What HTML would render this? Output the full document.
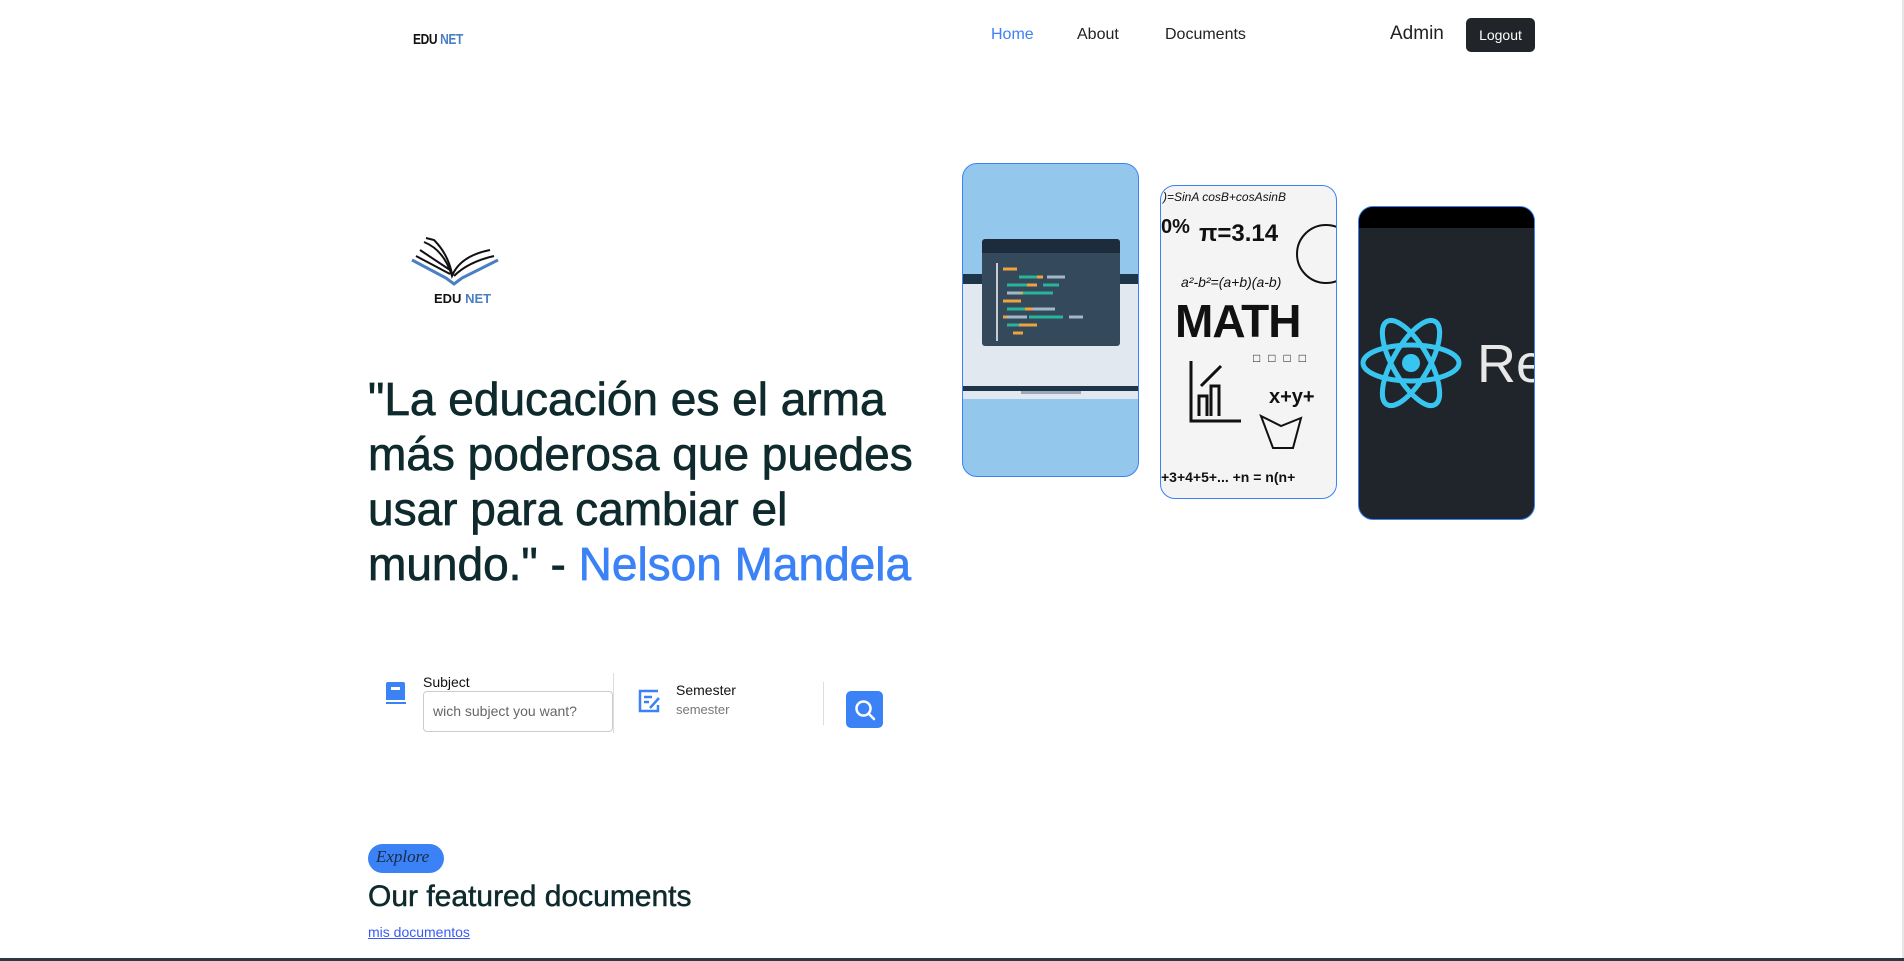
<!DOCTYPE html>
<html><head><meta charset="utf-8">
<style>
*{margin:0;padding:0;box-sizing:border-box}
body{width:1904px;height:961px;background:#fff;font-family:"Liberation Sans",sans-serif;position:relative;overflow:hidden;color:#10282b}
.abs{position:absolute}
.nav a{position:absolute;top:26px;font-size:16px;color:#222;text-decoration:none}
.logo{font-family:"Liberation Sans Narrow","Liberation Sans",sans-serif;font-weight:bold;letter-spacing:-0.5px}
.card{position:absolute;width:177px;height:314px;border:1px solid #3b82f6;border-radius:15px;overflow:hidden}
.quote{left:368px;top:372px;font-size:46px;line-height:55px;white-space:nowrap;color:#0e2a2c;-webkit-text-stroke:0.7px currentColor}
</style></head><body>
<div class="abs logo" style="left:413px;top:31px;font-size:15px;transform:scaleX(0.8);transform-origin:left"><span style="color:#111">EDU</span> <span style="color:#4a7fc4">NET</span></div>
<div class="nav">
<a style="left:991px;color:#3b82f6">Home</a>
<a style="left:1077px">About</a>
<a style="left:1165px">Documents</a>
</div>
<div class="abs" style="left:1390px;top:23px;font-size:19px;color:#222">Admin</div>
<div class="abs" style="left:1466px;top:18px;width:69px;height:34px;background:#212529;border-radius:5px;color:#fff;font-size:14px;line-height:34px;text-align:center">Logout</div>

<svg class="abs" style="left:410px;top:236px" width="92" height="72" viewBox="0 0 92 72">
<path d="M2 24 L36 42 L44 48 L52 42 L88 24" fill="none" stroke="#4a7fc4" stroke-width="3"/>
<path d="M6 20 L40 38 M10 14 L40 34 M14 6 Q34 14 42 40 Q50 20 80 14 M44 40 Q58 26 84 20" fill="none" stroke="#111" stroke-width="2"/>
<path d="M16 2 L24 4 Q38 18 42 38" fill="none" stroke="#111" stroke-width="2"/>
<text x="24" y="67" font-family="Liberation Sans" font-weight="bold" font-size="13" fill="#111">EDU <tspan fill="#4a7fc4">NET</tspan></text>
</svg>

<div class="abs quote">"La educación es el arma<br>más poderosa que puedes<br>usar para cambiar el<br>mundo." - <span style="color:#3b82f6">Nelson Mandela</span></div>

<!-- search -->
<svg class="abs" style="left:385px;top:681px" width="22" height="24" viewBox="0 0 22 24"><rect x="1" y="1" width="19" height="20" rx="2" fill="#3b82f6"/><rect x="6" y="6" width="9" height="3" fill="#fff"/><rect x="1" y="19" width="20" height="3" fill="#fff"/><rect x="1" y="21" width="20" height="2" fill="#3b82f6"/></svg>
<div class="abs" style="left:423px;top:674px;font-size:14px;color:#111">Subject</div>
<div class="abs" style="left:423px;top:691px;width:190px;height:41px;border:1px solid #ccc;border-radius:4px;font-size:14px;color:#666;padding:11px 9px">wich subject you want?</div>
<div class="abs" style="left:613px;top:673px;width:1px;height:60px;background:#ddd"></div>
<svg class="abs" style="left:637px;top:688px" width="26" height="26" viewBox="0 0 26 26"><path d="M21 3H3v20h18v-6" fill="none" stroke="#3b82f6" stroke-width="2.5"/><path d="M7 9h8M7 14h5" stroke="#3b82f6" stroke-width="2.5"/><path d="M13 20l9-10" stroke="#3b82f6" stroke-width="2.5"/></svg>
<div class="abs" style="left:676px;top:682px;font-size:14px;color:#111">Semester</div>
<div class="abs" style="left:676px;top:702px;font-size:13px;color:#777">semester</div>
<div class="abs" style="left:823px;top:682px;width:1px;height:43px;background:#ddd"></div>
<div class="abs" style="left:846px;top:691px;width:37px;height:37px;background:#3b82f6;border-radius:5px"></div>
<svg class="abs" style="left:854px;top:699px" width="22" height="22" viewBox="0 0 22 22"><circle cx="9.5" cy="9.5" r="7" fill="none" stroke="#fff" stroke-width="2.5"/><path d="M15 15l5 5" stroke="#fff" stroke-width="2.5" stroke-linecap="round"/></svg>

<div class="abs" style="left:368px;top:844px;width:76px;height:29px;background:#3b82f6;border-radius:15px;font-family:'Liberation Serif',serif;font-style:italic;font-size:17px;color:#1a2a44;padding:3px 8px">Explore</div>
<div class="abs" style="left:368px;top:880px;font-size:30px;color:#0e2a2c;-webkit-text-stroke:0.5px currentColor">Our featured documents</div>
<div class="abs" style="left:368px;top:924px;font-size:14px;color:#3b5bf6;text-decoration:underline">mis documentos</div>
<div class="abs" style="left:0;top:958px;width:1904px;height:3px;background:#2b3a3e"></div>
<div class="abs" style="left:1902px;top:0;width:2px;height:958px;background:#e5e5e5"></div>

<!-- card1 -->
<div class="card" style="left:962px;top:163px;background:#93c7ec">
<div class="abs" style="left:0;top:110px;width:177px;height:10px;background:#1d3449"></div>
<div class="abs" style="left:0;top:120px;width:177px;height:115px;background:#e2e8ef"></div>
<div class="abs" style="left:0;top:222px;width:177px;height:5px;background:#1d3449"></div>
<div class="abs" style="left:58px;top:227px;width:60px;height:3px;background:#9aa8b8"></div>
<div class="abs" style="left:19px;top:75px;width:138px;height:107px;background:#34495c;border-radius:3px;border-top:14px solid #1c2c3d"></div>
<svg class="abs" style="left:30px;top:95px" width="120" height="85">
<g stroke-width="3"><path d="M10 10h14M30 18h20M22 26h22M24 34h14M10 42h18M22 50h24M10 58h14M24 66h20M20 74h10" stroke="#f0a33a"/><path d="M26 18h18M14 26h20M50 26h16M30 34h30M14 50h18M36 58h34M14 66h12" stroke="#28b59b"/><path d="M54 18h18M14 34h14M40 50h22M14 58h20M76 58h14" stroke="#9fb9c8"/></g>
<path d="M4 4v78" stroke="#ccc" stroke-width="2"/></svg>
</div>

<!-- card2 -->
<div class="card" style="left:1160px;top:185px;background:#f4f4f4;font-family:'Liberation Sans',sans-serif;color:#111">
<div class="abs" style="left:2px;top:4px;font-size:12px;font-style:italic;white-space:nowrap">)=SinA cosB+cosAsinB</div>
<div class="abs" style="left:0;top:30px;font-size:20px;font-weight:bold">0%</div>
<div class="abs" style="left:38px;top:34px;font-size:24px;font-weight:bold;white-space:nowrap">π=3.14</div>
<div class="abs" style="left:20px;top:88px;font-size:14px;font-style:italic;white-space:nowrap">a²-b²=(a+b)(a-b)</div>
<div class="abs" style="left:14px;top:108px;font-size:46px;font-weight:900;letter-spacing:-1px">MATH</div>
<div class="abs" style="left:92px;top:165px;font-size:12px;letter-spacing:8px;white-space:nowrap">□□□□</div>
<svg class="abs" style="left:20px;top:170px" width="140" height="110"><path d="M10 5v60h50M18 60V40h8v20M30 60V30h8v30M20 30l20-20" fill="none" stroke="#111" stroke-width="3"/><path d="M80 60l20 10l20-8l-8 30l-20 0z" fill="none" stroke="#111" stroke-width="2"/></svg>
<div class="abs" style="left:108px;top:200px;font-size:20px;font-weight:bold">x+y+</div>
<div class="abs" style="left:0;top:283px;font-size:14px;font-weight:bold;white-space:nowrap">+3+4+5+... +n = n(n+</div>
<div class="abs" style="left:135px;top:38px;width:60px;height:60px;border:2px solid #111;border-radius:50%"></div>
</div>

<!-- card3 -->
<div class="card" style="left:1358px;top:206px;background:#20242b">
<div class="abs" style="left:0;top:0;width:177px;height:21px;background:#000"></div>
<svg class="abs" style="left:0;top:110px" width="104" height="92" viewBox="-52 -46 104 92"><g fill="none" stroke="#38c6f0" stroke-width="5"><ellipse rx="48" ry="18"/><ellipse rx="48" ry="18" transform="rotate(60)"/><ellipse rx="48" ry="18" transform="rotate(120)"/></g><circle r="9" fill="#38c6f0"/></svg>
<div class="abs" style="left:118px;top:126px;font-size:54px;color:#e8e8e8">Re</div>
</div>
</body></html>
